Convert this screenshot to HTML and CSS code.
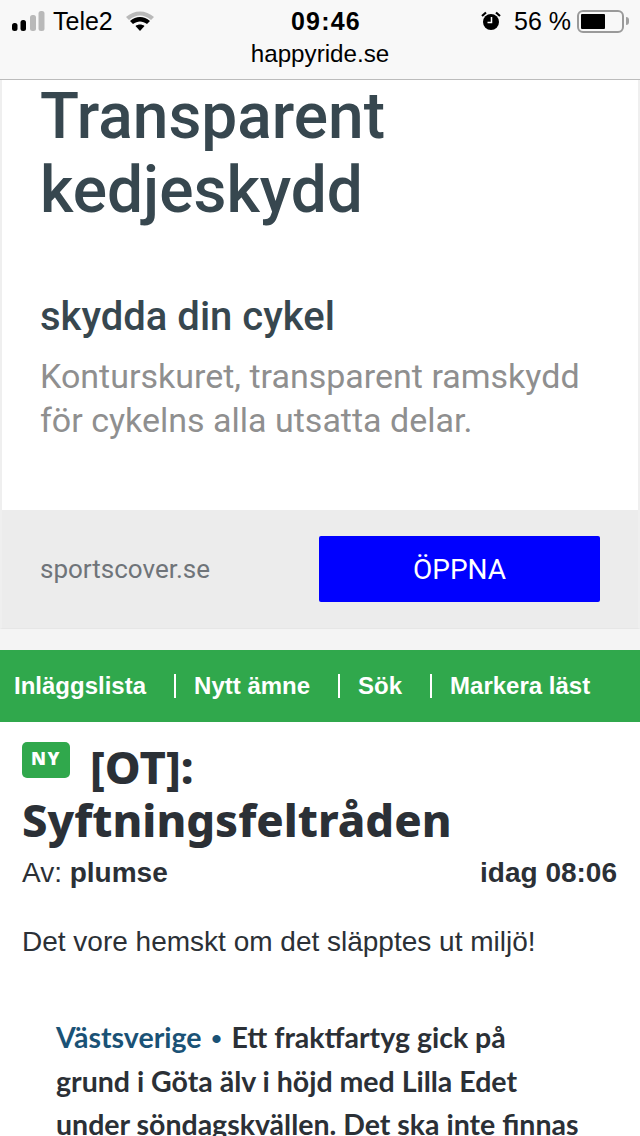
FILE: index.html
```html
<!DOCTYPE html>
<html lang="sv">
<head>
    <meta charset="UTF-8">
    <meta name="viewport" content="width=device-width, initial-scale=1.0">
    <title>happyride.se</title>
    <link rel="stylesheet" href="styles.css">
</head>
<body>
    <header class="browser-bar">
        <div class="status-row">
            <div class="status-left">
                <svg class="signal" width="33" height="20" viewBox="0 0 33 20">
                    <rect x="0" y="12" width="5.500" height="8" rx="2.500" fill="#000"/>
                    <rect x="8.500" y="9" width="5.500" height="11" rx="2.500" fill="#000"/>
                    <rect x="18" y="4" width="6" height="16" rx="2.500" fill="#b9b9b9"/>
                    <rect x="26.500" y="0" width="6" height="20" rx="2.500" fill="#b9b9b9"/>
                </svg>
                <span class="carrier">Tele2</span>
                <svg class="wifi" width="28" height="20" viewBox="0 0 28 20">
                    <path d="M0 6C8 -1.500 20 -1.500 28 6L25 9C18 3 10 3 3 9Z" fill="#b9b9b9"/>
                    <path d="M4 10C10 4.500 18 4.500 24 10L21 13C16.500 9.500 11.500 9.500 7 13Z" fill="#000"/>
                    <path d="M9.500 15C12 13 16 13 18.500 15L14 20Z" fill="#000"/>
                </svg>
            </div>
            <span class="clock">09:46</span>
            <div class="status-right">
                <svg class="alarm" width="20" height="20" viewBox="0 0 20 20">
                    <circle cx="10" cy="11" r="8" fill="#000"/>
                    <path d="M1 5L5 1.500M19 5L15 1.500" stroke="#000" stroke-width="2.200" fill="none"/>
                    <path d="M10.500 6V11.500H6.500" stroke="#fff" stroke-width="1.500" fill="none"/>
                </svg>
                <span class="battery-text">56 %</span>
                <div class="battery">
                    <div class="battery-level" style="width: 62%"></div>
                </div>
                <div class="battery-tip"></div>
            </div>
        </div>
        <div class="url">happyride.se</div>
    </header>

    <section class="ad">
        <div class="ad-body">
            <h2 class="ad-title">Transparent kedjeskydd</h2>
            <h3 class="ad-subtitle">skydda din cykel</h3>
            <p class="ad-text">Konturskuret, transparent ramskydd för cykelns alla utsatta delar.</p>
        </div>
        <div class="ad-footer">
            <span class="ad-site">sportscover.se</span>
            <a class="ad-button">ÖPPNA</a>
        </div>
    </section>

    <nav class="forum-nav">
        <a class="nav-link">Inläggslista</a>
        <a class="nav-link">Nytt ämne</a>
        <a class="nav-link">Sök</a>
        <a class="nav-link">Markera läst</a>
    </nav>

    <main class="post">
        <h1 class="post-title"><span class="badge-new">NY</span>[OT]: Syftningsfeltråden</h1>
        <div class="post-meta">
            <span>Av: <b>plumse</b></span>
            <b>idag 08:06</b>
        </div>
        <p class="post-text">Det vore hemskt om det släpptes ut miljö!</p>
        <blockquote class="quote"><span class="quote-place">Västsverige <span class="quote-dot">•</span></span> Ett fraktfartyg gick på grund i Göta älv i höjd med Lilla Edet under söndagskvällen. Det ska inte finnas</blockquote>
    </main>
</body>
</html>
```

FILE: styles.css
```css
* {
    margin: 0;
    padding: 0;
    box-sizing: border-box;
}

html, body {
    height: 1136px;
    overflow: hidden;
}

body {
    font-family: 'Liberation Sans', Arial, sans-serif;
    background: #f4f4f4;
    color: #2b3036;
}

.browser-bar {
    height: 80px;
    background: #f8f8f8;
    border-bottom: 1px solid #bcbcbc;
    color: #000;
}

.status-row {
    height: 40px;
    padding: 2px 0 0 12px;
    display: grid;
    grid-template-columns: 1fr auto 1fr;
    align-items: center;
}

.status-left {
    display: flex;
    align-items: center;
}

.carrier {
    font-size: 25px;
    margin-left: 8px;
}

.wifi {
    margin-left: 13px;
}

.clock {
    font-size: 25px;
    font-weight: bold;
    letter-spacing: 1.200px;
}

.status-right {
    display: flex;
    align-items: center;
    justify-content: flex-end;
    padding-right: 11px;
}

.battery-text {
    font-size: 25px;
    margin-left: 13px;
}

.battery {
    width: 47px;
    height: 23px;
    border: 2px solid #9a9a9a;
    border-radius: 6px;
    padding: 2px;
    margin-left: 6px;
}

.battery-level {
    height: 100%;
    background: #000;
    border-radius: 1px;
}

.battery-tip {
    width: 3px;
    height: 8px;
    background: #a0a0a0;
    border-radius: 0 3px 3px 0;
    margin-left: 2px;
}

.url {
    font-size: 24.200px;
    text-align: center;
    line-height: 28px;
}

.ad {
    height: 549px;
    border: 2px solid #efefef;
    border-top: 0;
    border-bottom: 1px solid #e6e6e6;
    background: #fff;
    font-family: Roboto, sans-serif;
    display: flex;
    flex-direction: column;
}

.ad-body {
    flex: 1;
    padding: 0 38px;
}

.ad-title {
    font-size: 64px;
    font-weight: 500;
    line-height: 74px;
    color: #37474f;
    margin-bottom: 65px;
}

.ad-subtitle {
    font-size: 40px;
    font-weight: 500;
    line-height: 48px;
    color: #37474f;
    margin-bottom: 13px;
}

.ad-text {
    font-size: 34px;
    line-height: 44px;
    color: #8f8f8f;
}

.ad-footer {
    height: 118px;
    background: #ececec;
    padding: 26px 38px;
    display: flex;
    align-items: center;
    justify-content: space-between;
}

.ad-site {
    font-size: 26px;
    color: #6f7479;
}

.ad-button {
    width: 281px;
    height: 66px;
    background: #0000ff;
    color: #fff;
    border-radius: 2px;
    font-size: 28px;
    display: flex;
    align-items: center;
    justify-content: center;
}

.forum-nav {
    height: 72px;
    margin-top: 21px;
    background: #30a84c;
    padding-left: 14px;
    display: flex;
    align-items: center;
}

.nav-link {
    color: #fff;
    font-size: 24px;
    font-weight: bold;
    line-height: 24px;
    white-space: nowrap;
    padding-right: 28px;
}

.nav-link + .nav-link {
    border-left: 2px solid #fff;
    padding-left: 18px;
}

.post {
    height: 414px;
    background: #fff;
    padding: 18px 22px 0;
}

.post-title {
    font-family: 'Noto Sans', sans-serif;
    font-size: 45.300px;
    font-weight: 800;
    line-height: 53px;
    color: #2b3036;
}

.badge-new {
    display: inline-block;
    vertical-align: 19px;
    width: 48px;
    height: 36px;
    line-height: 33px;
    background: #30a84c;
    border-radius: 5px;
    color: #fff;
    font-size: 18px;
    font-weight: 900;
    letter-spacing: 1.500px;
    text-align: center;
    margin-right: 20px;
}

.post-meta {
    display: flex;
    justify-content: space-between;
    font-size: 28px;
    line-height: 34px;
    padding-right: 1px;
    margin-top: 10px;
}

.post-text {
    font-size: 28px;
    line-height: 36px;
    margin-top: 34px;
}

.quote {
    font-family: Lato, sans-serif;
    font-size: 28.500px;
    font-weight: 700;
    line-height: 43px;
    margin: 56px 38px 0 34px;
}

.quote-place {
    color: #1a5276;
}

.quote-dot {
    font-family: 'Liberation Sans', sans-serif;
    margin: 0 3px;
}
```
